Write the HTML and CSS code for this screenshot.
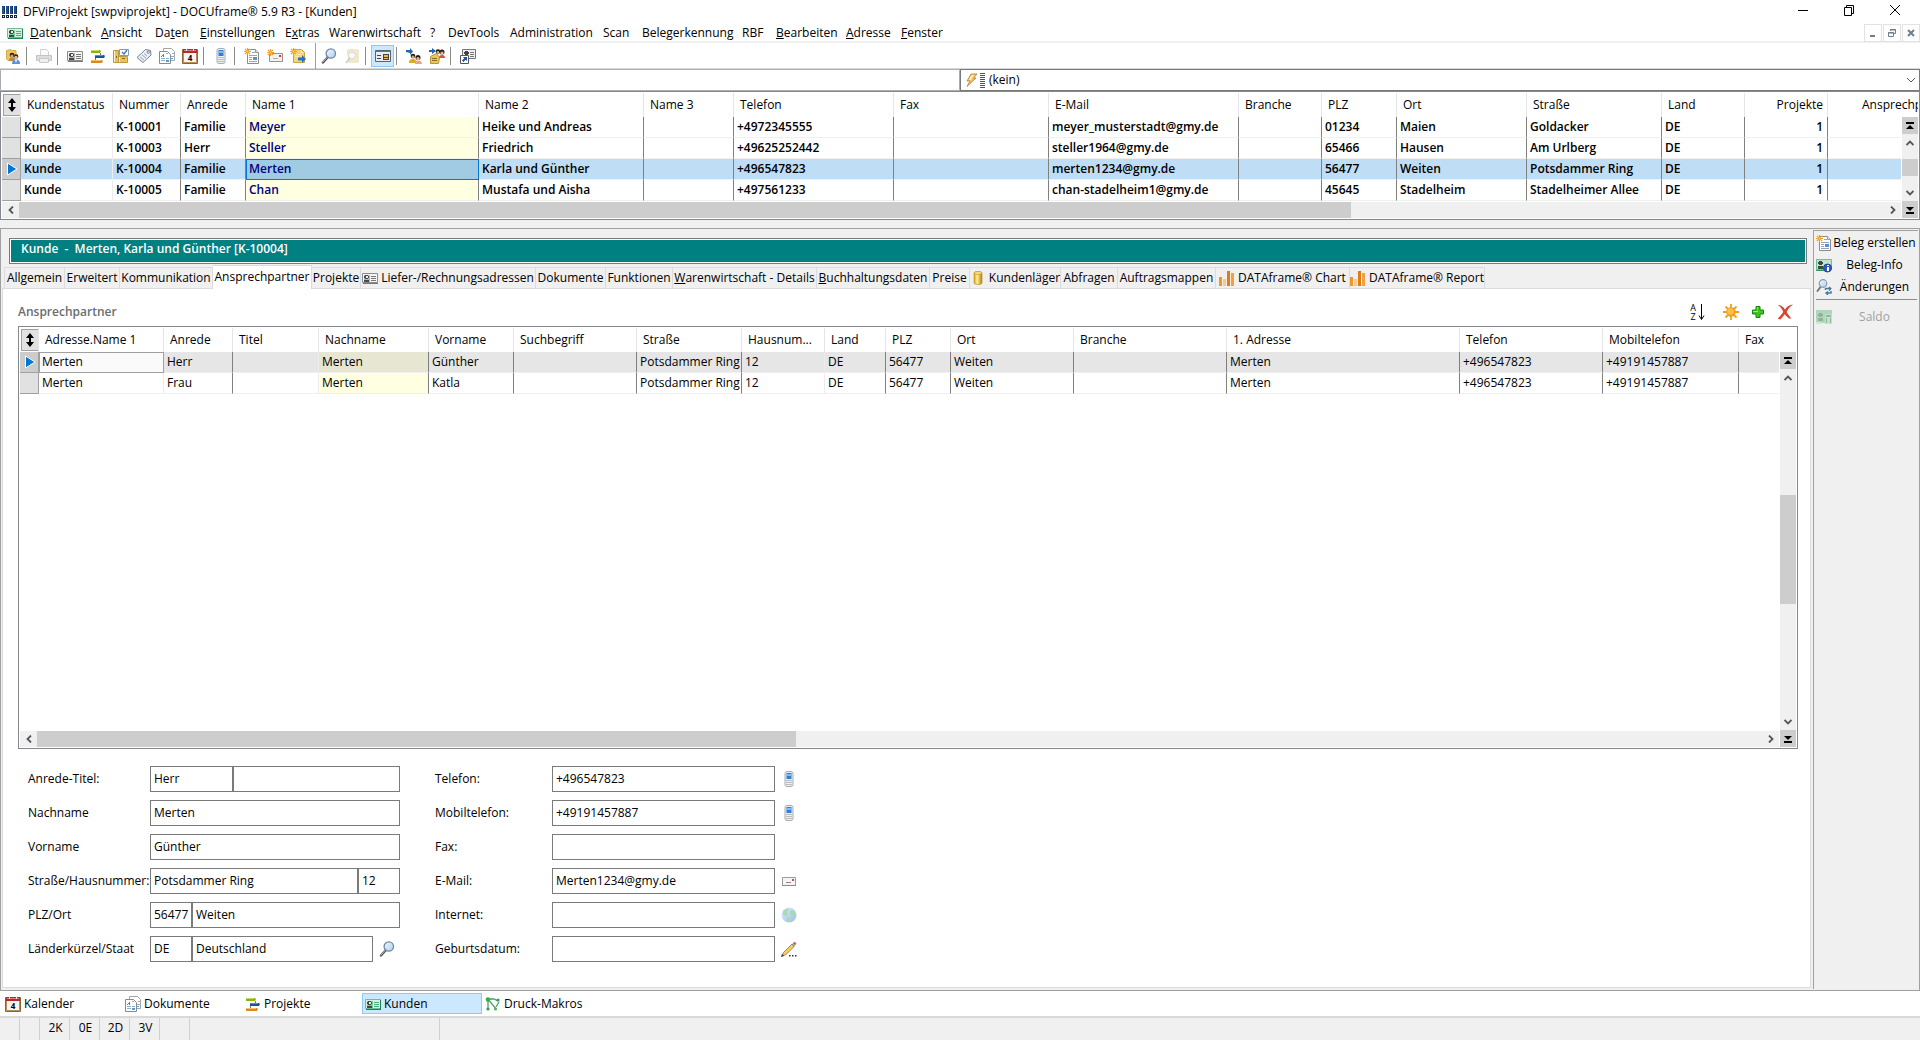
FILE: index.html
```
<!DOCTYPE html>
<html lang="de">
<head>
    <meta charset="UTF-8">
    <meta name="viewport" content="width=device-width, initial-scale=1.0">
    <link rel="stylesheet" href="styles.css">
    <title>DFViProjekt [swpviprojekt] - DOCUframe® 5.9 R3 - [Kunden]</title>
</head>
<body>
    <!-- icon sprite -->
    <svg class="sprite" aria-hidden="true">
        <defs>
            <linearGradient id="glass" x1="0" y1="0" x2="1" y2="1">
                <stop offset="0" stop-color="#f4faff"/><stop offset="1" stop-color="#a9cdf2"/>
            </linearGradient>
            <linearGradient id="gold" x1="0" y1="0" x2="1" y2="0">
                <stop offset="0" stop-color="#d9a514"/><stop offset=".4" stop-color="#fff0a0"/><stop offset="1" stop-color="#b87f00"/>
            </linearGradient>
            <linearGradient id="globeFill" x1="0" y1="0" x2="1" y2="1">
                <stop offset="0" stop-color="#e4effc"/><stop offset="1" stop-color="#9db9ee"/>
            </linearGradient>
            <linearGradient id="logoFill" x1="0" y1="0" x2="1" y2="0">
                <stop offset="0" stop-color="#5f8fd0"/><stop offset=".5" stop-color="#1d4f91"/><stop offset="1" stop-color="#12315f"/>
            </linearGradient>
        </defs>
        <symbol id="logo" viewBox="0 0 16 12">
            <path fill="#1d4f91" d="M0 0h3v8H0zM4 0h3v8H4zM8 0h3v8H8zM12 0h3v8h-3z"/>
            <path fill="#12315f" d="M2 0h1v8H2zM6 0h1v8H6zM10 0h1v8h-1zM14 0h1v8h-1z"/>
            <path fill="#16233c" d="M0 9h3v3H0zM4 9h3v3H4zM8 9h3v3H8zM12 9h3v3h-3z"/>
            <path fill="#dce6f2" d="M1 10h1v1H1zM5 10h1v1H5zM9 10h1v1H9zM13 10h1v1h-1z"/>
        </symbol>
        <symbol id="card" viewBox="0 0 16 16">
            <path fill="#f4f4f4" stroke="#8c8c8c" d="M.5 3.500h15v9h-15z"/>
            <path fill="#777" d="M1 13h15v1H1z"/>
            <path fill="#b5b5b5" d="M2 5h6v7H2z"/>
            <path fill="#4a4a4a" d="M3 5h3v1h1v2H6v1H3V8H2V6h1zM2 10h5v2H2z"/>
            <path fill="#eee" d="M4 6h2v2H4z"/>
            <path fill="#777" d="M9 6h5v1H9zM9 8h5v1H9zM9 10h5v1H9z"/>
        </symbol>
        <symbol id="card-green" viewBox="0 0 16 16">
            <path fill="#d4f3df" stroke="#6cbf93" d="M.5 3.500h15v9h-15z"/>
            <path fill="#1d7f50" d="M1 13h15v1H1zM15 4h1v9h-1z"/>
            <path fill="#7dc79c" d="M2 5h6v7H2z"/>
            <path fill="#3d4a44" d="M3 5h3v1h1v2H6v1H3V8H2V6h1zM2 10h5v2H2z"/>
            <path fill="#e6efe9" d="M4 6h2v2H4z"/>
            <path fill="#4fae7c" d="M9 6h5v1H9zM9 8h5v1H9zM9 10h5v1H9z"/>
        </symbol>
        <symbol id="people-folder" viewBox="0 0 16 16">
            <path fill="#e9c65e" stroke="#d0ac48" d="M1.500 2.500L6 1.500l1 1h4v8l-8 2-1.500-1.500z"/>
            <circle cx="7" cy="7" r="2.300" fill="#2c1c14"/><circle cx="7" cy="8" r="1.600" fill="#dba36f"/>
            <path fill="#b98a3a" d="M4 13c0-3 1-3.500 3-3.500s3 1 3 3.500z"/>
            <circle cx="11" cy="8.500" r="2.300" fill="#2c1c14"/><circle cx="11" cy="9.500" r="1.700" fill="#e9b98b"/>
            <path fill="#5b8fe0" d="M7 16c0-3 1-4.500 4-4.500s4 1.500 4 4.500z"/><path fill="#fff" d="M10 12h2l-1 3z"/>
        </symbol>
        <symbol id="printer" viewBox="0 0 16 16">
            <path fill="#fafafa" stroke="#d0d0d0" d="M4.500 1.500h6l2 2v4h-8z"/>
            <path fill="#dcdcdc" stroke="#c4c4c4" d="M.5 7.500h15v5H.5z"/>
            <path fill="#efefef" stroke="#c8c8c8" d="M3.500 10.500h9v4h-9z"/>
        </symbol>
        <symbol id="gantt" viewBox="0 0 16 16">
            <path fill="#8fae1c" d="M1 2h9l1 1-1 2H1z"/><path fill="#c6dc5a" d="M1 2h8v1H1z"/>
            <path fill="#14569b" d="M5 7h9l1 1-1 2H5z"/><path fill="#3f97e0" d="M5 7h8v1H5z"/>
            <path fill="#d98a26" d="M1 12h11l1 1-1 2H1z"/><path fill="#f7be63" d="M1 12h10v1H1z"/>
            <path fill="#777" d="M10 5h1v2h-1zM5 10h1v2H5z"/>
        </symbol>
        <symbol id="cabinet" viewBox="0 0 16 16">
            <path fill="#e8c35c" stroke="#b99a44" d="M.5 2.500h5v12h-5zM5.500 8.500h9v6h-9z"/>
            <path fill="#fff1bd" d="M1 3h1v11H1zM6 9h1v5H6z"/>
            <path fill="#fff" stroke="#7f9fbf" d="M6.500 1.500h9v6h-9z"/>
            <path fill="none" stroke="#3a78b8" stroke-width="1.300" d="M9 4l2 2 3-4"/>
            <path fill="#8b6a1c" d="M3 8h1v2H3zM9 10h3v1H9z"/>
        </symbol>
        <symbol id="tag" viewBox="0 0 16 16">
            <path fill="#eef2f6" stroke="#73818f" d="M9.500 1.500l5 1 .500 4.500-8 7.500-6-5z"/>
            <circle cx="12.200" cy="4.200" r="1.200" fill="#fff" stroke="#73818f"/>
            <path stroke="#8fa3b8" d="M4 9l4 3M6 7l4 3M8 5.500l3 2.500"/>
        </symbol>
        <symbol id="docs" viewBox="0 0 16 16">
            <path fill="#fff" stroke="#a6a6a6" d="M4.500.5h8l3 3v9h-11z"/>
            <path fill="#fff" stroke="#8a8a8a" d="M.5 3.500h8l3 3v9H.5z"/>
            <path fill="#5b77c9" d="M2 8h1V7h1V6h1v3H4V8H3v1H2z"/>
            <path fill="#8fb0cc" d="M2 10h4v1H2zM2 12h4v1H2zM7 10h3v1H7zM7 5h2v1H7zM13 5h2v1h-2zM12 8h3v1h-3z"/>
            <path fill="#4fa3d8" d="M7 12h3v2H7zM12 10h2v1h-2z"/>
        </symbol>
        <symbol id="calendar" viewBox="0 0 16 16">
            <path fill="#f6f6f6" stroke="#8a6234" d="M.5 1.500h15v14H.5z"/>
            <path fill="none" stroke="#b98d58" d="M1.500 5v9.500h13V5"/>
            <path fill="#b82a2a" d="M1 1h14v4H1z"/><path fill="#e08078" d="M2 2h12v1H2z"/>
            <path fill="#eee" d="M4 0h1v3H4zM11 0h1v3h-1z"/>
            <text x="8" y="13" text-anchor="middle" class="day">4</text>
        </symbol>
        <symbol id="phone" viewBox="0 0 16 16">
            <rect x="4" y=".5" width="8" height="15" rx="2" fill="#eceff2" stroke="#a7adb3"/>
            <path fill="#2f7fd0" d="M5.500 2h5v6h-5z"/><path fill="#7fbcf0" d="M6 3h4v2H6z"/>
            <path fill="#8a8a8a" d="M5.500 9h1v1h-1zM7.500 9h1v1h-1zM9.500 9h1v1h-1zM5.500 11h1v1h-1zM7.500 11h1v1h-1zM9.500 11h1v1h-1zM5.500 13h1v1h-1zM7.500 13h1v1h-1zM9.500 13h1v1h-1z"/>
        </symbol>
        <symbol id="spark" viewBox="0 0 8 8">
            <path stroke="#f0a020" stroke-width="1.400" d="M4 0v8M0 4h8M1 1l6 6M7 1L1 7"/>
            <path fill="#ffd45a" d="M3 3h2v2H3z"/>
        </symbol>
        <symbol id="new-doc" viewBox="0 0 16 16">
            <path fill="#fff" stroke="#8a8a8a" d="M3.500 1.500h8l3 3v11h-11z"/>
            <path fill="#e8e8e8" stroke="#9a9a9a" d="M11.500 1.500v3h3"/>
            <path fill="#90a8bc" d="M8 4h3v1H8zM5 7h8v1H5zM5 9h3v1H5zM5 11h3v1H5zM5 13h8v1H5z"/>
            <path fill="#5a8fd0" d="M9 9h4v3H9z"/>
            <use href="#spark" x="0" y="0" width="7" height="7"/>
        </symbol>
        <symbol id="new-mail" viewBox="0 0 16 16">
            <path fill="#f4f1ee" stroke="#9a928a" d="M2.500 5.500h13v8h-13z"/>
            <path fill="#d33" d="M12 7h2v2h-2z"/><path fill="#aaa" d="M6 10h5v1H6z"/>
            <use href="#spark" x="0" y="1" width="7" height="7"/>
        </symbol>
        <symbol id="new-note" viewBox="0 0 16 16">
            <path fill="#f3d774" stroke="#c9a544" d="M3.500 1.500h8l3 3v10h-11z"/>
            <path fill="#fae9a8" d="M11 2l3 3h-3zM5 6h7v1H5zM5 8h4v1H5z"/>
            <path fill="#2e6fc4" d="M8 9.500h4V7l4 4-4 4v-2.500H8z"/>
            <use href="#spark" x="0" y="0" width="7" height="7"/>
        </symbol>
        <symbol id="search" viewBox="0 0 16 16">
            <path stroke="#555" stroke-width="2.400" stroke-linecap="round" d="M6.500 9.500L2 14.500"/>
            <path stroke="#b5b5b5" stroke-width="1" stroke-linecap="round" d="M6 9.500L2 14"/>
            <circle cx="9.800" cy="5.500" r="4.700" fill="url(#glass)" stroke="#7088a4" stroke-width="1.300"/>
        </symbol>
        <symbol id="search-folder" viewBox="0 0 16 16">
            <g opacity=".35"><path fill="#e9c65e" stroke="#c09a35" d="M3.500 2.500L8 1l1 1h5v12h-9z"/>
            <circle cx="8" cy="7.500" r="3.500" fill="#eaf3fc" stroke="#888"/>
            <path stroke="#777" stroke-width="2" d="M6 10l-4 5"/></g>
        </symbol>
        <symbol id="form" viewBox="0 0 16 16">
            <path fill="#e9ecf0" stroke="#5a6470" d="M.5 2.500h15v11H.5z"/><path fill="#6a7684" d="M1 3h14v1H1z"/>
            <path fill="#444" d="M2 7h4v1H2zM2 10h4v1H2zM8 6h6v1H8zM8 9h6v1H8zM8 11h6v1H8zM8 6h1v3H8zM13 6h1v6h-1zM8 9h1v3H8z"/>
            <path fill="#e3c04e" d="M9 7h4v2H9zM9 10h4v1H9z"/>
        </symbol>
        <symbol id="assign" viewBox="0 0 16 16">
            <path fill="#2465b5" d="M0 2h4V0l3 3.500L4 7V5L0 4z"/>
            <circle cx="7" cy="8" r="2.300" fill="#2c1c14"/><circle cx="7" cy="9" r="1.500" fill="#dba36f"/>
            <path fill="#d8ac30" d="M3 15c0-3 1-4 4-4s3 1 3 4z"/>
            <circle cx="12" cy="9.500" r="2.500" fill="#2c1c14"/><circle cx="12" cy="10.500" r="1.600" fill="#e9b98b"/>
            <path fill="#e6a48c" d="M9 16c0-2.500 1-3.500 3-3.500s4 1 4 3.500z"/>
        </symbol>
        <symbol id="move" viewBox="0 0 16 16">
            <path fill="#e9c65e" stroke="#b89638" d="M1.500 8.500l6-3 3 4-1 6h-8z"/><path fill="#8b6a1c" d="M3 10h5v1H3zM3 12h5v1H3z"/>
            <path fill="#2465b5" d="M0 2h3V0l4 3-4 3V4H0z"/>
            <circle cx="9" cy="3.500" r="2.300" fill="#2c1c14"/><circle cx="9" cy="4.300" r="1.400" fill="#dba36f"/>
            <circle cx="13" cy="4" r="2.500" fill="#2c1c14"/><circle cx="13" cy="5" r="1.600" fill="#e9b98b"/>
            <path fill="#d4504a" d="M10 10c0-2 1-3 3-3s3 1 3 3z"/>
        </symbol>
        <symbol id="shortcut" viewBox="0 0 16 16">
            <path fill="#f0f0f0" stroke="#777" d="M2.500 1.500h13v9h-13z"/>
            <path fill="#444" d="M5 3h3v1h1v2H8v1H5V6H4V4h1z"/><path fill="#777" d="M10 4h4v1h-4zM10 6h4v1h-4zM10 8h4v1h-4z"/>
            <path fill="#fff" stroke="#555" d="M.5 7.500h8v8h-8z"/><path fill="#1f4f9f" d="M3 9h4v4L5.600 11.800 3.400 14 2 12.600 4.300 10.300z"/>
        </symbol>
        <symbol id="bolt" viewBox="0 0 16 16">
            <path fill="#f3c06a" stroke="#b57a38" stroke-width=".800" d="M7 2h6L9.500 6H12l-9 8.500L6 9H3z"/>
            <path fill="#fdeab8" d="M7.500 3h3L7 8H4.500z"/>
        </symbol>
        <symbol id="cylinder" viewBox="0 0 16 16">
            <path fill="url(#gold)" stroke="#b88a10" stroke-width=".600" d="M4 3c0-2 8-2 8 0v10c0 2-8 2-8 0z"/>
            <ellipse cx="8" cy="3" rx="4" ry="1.400" fill="#fbe68a" stroke="#b88a10" stroke-width=".600"/>
        </symbol>
        <symbol id="bars" viewBox="0 0 16 16">
            <path fill="#f0962a" d="M0 7h3v9H0z"/><path fill="#f8c88c" d="M4 9h3v7H4z"/><path fill="#e07c14" d="M8 1h3v15H8z"/><path fill="#f0a040" d="M12 3h3v13h-3z"/>
        </symbol>
        <symbol id="card-info" viewBox="0 0 16 16">
            <path fill="#bfe6cc" stroke="#6cbf93" d="M.5 2.500h15v10h-15z"/>
            <path fill="#3d4a44" d="M3 4h3v1h1v2H6v1H3V7H2V5h1zM2 9h5v3H2z"/>
            <path fill="#2f9a5f" d="M0 13h10v1H0z"/>
            <circle cx="11.500" cy="11" r="4" fill="#3159c4" stroke="#24409a"/><path fill="#fff" d="M11 8h2v1h-2zM11 10h2v4h-2z"/>
        </symbol>
        <symbol id="search-sync" viewBox="0 0 16 16">
            <path stroke="#777" stroke-width="2" stroke-linecap="round" d="M4.500 8L1.500 12"/>
            <circle cx="7" cy="4.500" r="3.800" fill="url(#glass)" stroke="#8c9cb0" stroke-width="1.200"/>
            <path fill="none" stroke="#4a7a9a" stroke-width="1.400" d="M9.500 11V9.500H14M13 8l1.800 1.500L13 11.500M15 12v2h-4.500M12 12.500L10 14l2 1.800"/>
        </symbol>
        <symbol id="cash" viewBox="0 0 16 16">
            <g opacity=".55"><path fill="#79c48d" d="M0 1h16v4H9v9H0z"/>
            <path fill="#4a7a5a" d="M3 4h3v1h1v2H6v1H3V7H2V5h1zM2 9h5v3H2z"/>
            <path fill="#bfe2a8" d="M0 13h6v2H0z"/><path fill="#9fd8b0" d="M9 5h7v10H9z"/><path fill="#3f8a5a" d="M10 6h5v2h-5zM10 9h1v5h-1zM14 9h1v5h-1z"/></g>
        </symbol>
        <symbol id="sun" viewBox="0 0 16 16">
            <path stroke="#f0a21c" stroke-width="1.800" d="M8 0v16M0 8h16M2.500 2.500l11 11M13.500 2.500l-11 11"/>
            <circle cx="8" cy="8" r="4.800" fill="#f2a01e"/><circle cx="7.500" cy="7.500" r="3.200" fill="#fcbf48"/>
        </symbol>
        <symbol id="plus" viewBox="0 0 16 16">
            <path fill="#3cc81e" stroke="#17850c" d="M6 2.500h4V6h3.500v4H10v3.500H6V10H2.500V6H6z"/>
            <path fill="#9cec84" d="M7 3h1v4H3v1h5z"/>
        </symbol>
        <symbol id="cross" viewBox="0 0 16 16">
            <path fill="#d8452f" d="M1 1c3 0 5 1.500 7 4.500C10 2.500 12 1 16 .5 12.500 3 11 5 9.700 8c1.500 2.500 2.500 4 4.600 6.500h-2.300C10.500 13.500 9 12 7.800 10.300 6 12.500 5 14 3.500 15.500L.8 14.800C3 12 5 10 6.200 7.700 5 5 3.500 3 1 1z"/>
        </symbol>
        <symbol id="mail" viewBox="0 0 16 16">
            <path fill="#f4f4f4" stroke="#9c9c9c" d="M1.500 4.500h13v8h-13z"/><path fill="#8a8a8a" d="M1 12h14v1H1zM5 9h5v1H5z"/><path fill="#e0463c" d="M11 6h2v2h-2z"/>
        </symbol>
        <symbol id="globe" viewBox="0 0 16 16">
            <circle cx="8" cy="8" r="7.500" fill="url(#globeFill)"/>
            <path fill="#a2dcb0" d="M2 4l4-2.500 2 1L6 5l1 2-3 2-2-1zM9 3l4 1 2 4-3 2-3-3zM5 10l4 1 1 3-3 1z"/>
        </symbol>
        <symbol id="pencil" viewBox="0 0 16 16">
            <path fill="#f4cf68" stroke="#94702c" stroke-width=".800" d="M2.500 11.500L11 3l2.300 2.300L5 13.500l-4 1.500z"/>
            <path fill="#333" d="M0 16l1-3 2 2zM8 14h1.500v1.500H8zM11 14h1.500v1.500H11zM14 14h1.500v1.500H14z"/>
            <path fill="#6a9a80" d="M10.500 3.500l1-1 2.300 2.300-1 1z"/><path fill="#d4586a" d="M11.800 2.200L13.500.8 15.500 2.500 14 4.500z"/>
        </symbol>
        <symbol id="macro" viewBox="0 0 16 16">
            <path fill="none" stroke="#4a9f6c" stroke-width="1.300" d="M3 13V3l8 10M3 3h6l4 2M11 11l3-5"/>
            <circle cx="3" cy="3.500" r="2.300" fill="#2fb24a"/><circle cx="13" cy="4" r="1.600" fill="#3c9464"/>
            <circle cx="3" cy="13" r="1.600" fill="#3c9464"/><circle cx="10.500" cy="13" r="1.600" fill="#5aae6a"/>
        </symbol>
        <symbol id="updown" viewBox="0 0 10 14">
            <path d="M5 0l4 5H6v4h3l-4 5-4-5h3V5H1z"/>
        </symbol>
        <symbol id="marker" viewBox="0 0 12 14"><path fill="#0078d7" stroke="#fff" d="M1.500 1L11 7l-9.500 6z"/></symbol>
        <symbol id="first" viewBox="0 0 8 8"><path d="M0 0h8v2H0zM4 3l4 4H0z"/></symbol>
        <symbol id="last" viewBox="0 0 8 8"><path d="M0 6h8v2H0zM4 5l4-4H0z"/></symbol>
        <symbol id="left" viewBox="0 0 8 8"><path fill="none" stroke="#555" stroke-width="1.800" d="M6 .5L2.500 4 6 7.500"/></symbol>
        <symbol id="right" viewBox="0 0 8 8"><path fill="none" stroke="#555" stroke-width="1.800" d="M2 .5L5.500 4 2 7.500"/></symbol>
        <symbol id="up" viewBox="0 0 8 8"><path fill="none" stroke="#555" stroke-width="1.800" d="M.5 6L4 2.500 7.500 6"/></symbol>
        <symbol id="down" viewBox="0 0 8 8"><path fill="none" stroke="#555" stroke-width="1.800" d="M.5 2L4 5.500 7.500 2"/></symbol>
    </svg>

    <header class="titlebar">
        <svg class="logo"><use href="#logo"/></svg>
        <span class="title">DFViProjekt [swpviprojekt] - DOCUframe® 5.9 R3 - [Kunden]</span>
        <div class="window-buttons">
            <button aria-label="Minimieren"><svg viewBox="0 0 12 12"><path d="M1 6.500h10"/></svg></button>
            <button aria-label="Wiederherstellen"><svg viewBox="0 0 12 12"><path d="M1.500 3.500h7v8h-7zM3.500 3.500v-2h7v8h-2"/></svg></button>
            <button aria-label="Schließen"><svg viewBox="0 0 12 12"><path d="M1 1l10 10M11 1L1 11"/></svg></button>
        </div>
    </header>

    <nav class="menubar">
        <svg class="icon"><use href="#card-green"/></svg>
        <div class="menu">
            <button><u>D</u>atenbank</button>
            <button><u>A</u>nsicht</button>
            <button>Da<u>t</u>en</button>
            <button><u>E</u>instellungen</button>
            <button>E<u>x</u>tras</button>
            <button>Warenwirtschaft</button>
            <button>?</button>
            <button>DevTools</button>
            <button>Administration</button>
            <button>Scan</button>
            <button>Belegerkennung</button>
            <button>RBF</button>
            <button><u>B</u>earbeiten</button>
            <button><u>A</u>dresse</button>
            <button><u>F</u>enster</button>
        </div>
        <div class="mdi-buttons">
            <button aria-label="Fenster minimieren"><svg viewBox="0 0 10 10"><path d="M2 8h5"/></svg></button>
            <button aria-label="Fenster wiederherstellen"><svg viewBox="0 0 10 10"><path class="thin" d="M1.500 4.500h5v4h-5zM1 5h6M3.500 3V1.500h5v4H7M3 2h6"/></svg></button>
            <button aria-label="Fenster schließen"><svg viewBox="0 0 10 10"><path d="M2 2l6 6M8 2L2 8"/></svg></button>
        </div>
    </nav>

    <div class="toolbar">
        <button aria-label="Adressen"><svg class="icon"><use href="#people-folder"/></svg></button>
        <span class="sep"></span>
        <button aria-label="Drucken"><svg class="icon"><use href="#printer"/></svg></button>
        <span class="sep"></span>
        <button aria-label="Kunden"><svg class="icon"><use href="#card"/></svg></button>
        <button aria-label="Projekte"><svg class="icon"><use href="#gantt"/></svg></button>
        <button aria-label="Aufgaben"><svg class="icon"><use href="#cabinet"/></svg></button>
        <button aria-label="Artikel"><svg class="icon"><use href="#tag"/></svg></button>
        <button aria-label="Dokumente"><svg class="icon"><use href="#docs"/></svg></button>
        <button aria-label="Kalender"><svg class="icon"><use href="#calendar"/></svg></button>
        <span class="sep"></span>
        <button aria-label="Telefon"><svg class="icon"><use href="#phone"/></svg></button>
        <span class="sep"></span>
        <button aria-label="Neues Dokument"><svg class="icon"><use href="#new-doc"/></svg></button>
        <button aria-label="Neue E-Mail"><svg class="icon"><use href="#new-mail"/></svg></button>
        <button aria-label="Neue Notiz"><svg class="icon"><use href="#new-note"/></svg></button>
        <span class="sep sep-full"></span>
        <button aria-label="Suchen"><svg class="icon"><use href="#search"/></svg></button>
        <button aria-label="Suchordner"><svg class="icon"><use href="#search-folder"/></svg></button>
        <span class="sep"></span>
        <button class="pressed" aria-label="Formularansicht"><svg class="icon"><use href="#form"/></svg></button>
        <span class="sep"></span>
        <button aria-label="Zuordnen"><svg class="icon"><use href="#assign"/></svg></button>
        <button aria-label="Verschieben"><svg class="icon"><use href="#move"/></svg></button>
        <span class="sep"></span>
        <button aria-label="Verknüpfung"><svg class="icon"><use href="#shortcut"/></svg></button>
    </div>

    <div class="filterbar">
        <input type="text" aria-label="Schnellsuche">
        <div class="filter-select">
            <svg class="icon"><use href="#bolt"/></svg>
            <span class="grip"></span>
            <select aria-label="Filter"><option>(kein)</option></select>
            <svg class="chevron" viewBox="0 0 10 10"><path d="M1 3l4 4 4-4"/></svg>
        </div>
    </div>

    <section class="grid customers">
        <table>
            <colgroup>
                <col style="width: 19px"><col style="width: 92px"><col style="width: 68px"><col style="width: 65px"><col style="width: 233px"><col style="width: 165px"><col style="width: 90px"><col style="width: 160px"><col style="width: 155px"><col style="width: 190px"><col style="width: 83px"><col style="width: 75px"><col style="width: 130px"><col style="width: 135px"><col style="width: 83px"><col style="width: 83px"><col>
            </colgroup>
            <thead>
                <tr>
                    <th class="gutter"><button aria-label="Sortierung"><svg><use href="#updown"/></svg></button></th>
                    <th>Kundenstatus</th><th>Nummer</th><th>Anrede</th><th>Name 1</th><th>Name 2</th><th>Name 3</th><th>Telefon</th><th>Fax</th><th>E-Mail</th><th>Branche</th><th>PLZ</th><th>Ort</th><th>Straße</th><th>Land</th><th class="num">Projekte</th><th class="last">Ansprechp</th>
                </tr>
            </thead>
            <tbody>
                <tr><td class="gutter"></td><td class="soft">Kunde</td><td>K-10001</td><td>Familie</td><td class="key">Meyer</td><td>Heike und Andreas</td><td></td><td>+4972345555</td><td></td><td>meyer_musterstadt@gmy.de</td><td></td><td>01234</td><td>Maien</td><td>Goldacker</td><td>DE</td><td class="num">1</td><td></td></tr>
                <tr><td class="gutter"></td><td class="soft">Kunde</td><td>K-10003</td><td>Herr</td><td class="key">Steller</td><td>Friedrich</td><td></td><td>+49625252442</td><td></td><td>steller1964@gmy.de</td><td></td><td>65466</td><td>Hausen</td><td>Am Urlberg</td><td>DE</td><td class="num">1</td><td></td></tr>
                <tr class="selected"><td class="gutter"><svg><use href="#marker"/></svg></td><td class="soft">Kunde</td><td>K-10004</td><td>Familie</td><td class="key focus">Merten</td><td>Karla und Günther</td><td></td><td>+496547823</td><td></td><td>merten1234@gmy.de</td><td></td><td>56477</td><td>Weiten</td><td>Potsdammer Ring</td><td>DE</td><td class="num">1</td><td></td></tr>
                <tr><td class="gutter"></td><td class="soft">Kunde</td><td>K-10005</td><td>Familie</td><td class="key">Chan</td><td>Mustafa und Aisha</td><td></td><td>+497561233</td><td></td><td>chan-stadelheim1@gmy.de</td><td></td><td>45645</td><td>Stadelheim</td><td>Stadelheimer Allee</td><td>DE</td><td class="num">1</td><td></td></tr>
            </tbody>
        </table>
        <div class="hscroll">
            <button aria-label="Links"><svg><use href="#left"/></svg></button>
            <div class="track"><div class="thumb" style="width: 71.4%"></div></div>
            <button aria-label="Rechts"><svg><use href="#right"/></svg></button>
        </div>
        <div class="vscroll">
            <button class="end" aria-label="Anfang"><svg><use href="#first"/></svg></button>
            <button aria-label="Hoch"><svg><use href="#up"/></svg></button>
            <div class="track"><div class="thumb"></div></div>
            <button aria-label="Runter"><svg><use href="#down"/></svg></button>
            <button class="end" aria-label="Ende"><svg><use href="#last"/></svg></button>
        </div>
    </section>

    <main class="workspace">
        <section class="record">
            <h1 class="record-title">Kunde&nbsp; -&nbsp; Merten, Karla und Günther [K-10004]</h1>
            <div class="tabs" role="tablist">
                <button role="tab">Allgemein</button>
                <button role="tab">Erweitert</button>
                <button role="tab">Kommunikation</button>
                <button role="tab" class="active" aria-selected="true">Ansprechpartner</button>
                <button role="tab">Projekte</button>
                <button role="tab"><svg class="icon"><use href="#card"/></svg>Liefer-/Rechnungsadressen</button>
                <button role="tab">Dokumente</button>
                <button role="tab">Funktionen</button>
                <button role="tab"><span><u>W</u>arenwirtschaft - Details</span></button>
                <button role="tab"><span><u>B</u>uchhaltungsdaten</span></button>
                <button role="tab">Preise</button>
                <button role="tab"><svg class="icon"><use href="#cylinder"/></svg>Kundenläger</button>
                <button role="tab">Abfragen</button>
                <button role="tab">Auftragsmappen</button>
                <button role="tab"><svg class="icon"><use href="#bars"/></svg>DATAframe® Chart</button>
                <button role="tab"><svg class="icon"><use href="#bars"/></svg>DATAframe® Report</button>
            </div>
            <div class="panel">
                <div class="panel-head">
                    <h2>Ansprechpartner</h2>
                    <div class="panel-tools">
                        <button class="sort" aria-label="Sortieren"><span class="sort-letters"><span>A</span><span>Z</span></span><svg viewBox="0 0 7 16"><path d="M3.500 0v15M1 11.500l2.500 4 2.500-4"/></svg></button>
                        <button aria-label="Neu"><svg class="icon"><use href="#sun"/></svg></button>
                        <button aria-label="Hinzufügen"><svg class="icon"><use href="#plus"/></svg></button>
                        <button aria-label="Entfernen"><svg class="icon"><use href="#cross"/></svg></button>
                    </div>
                </div>

                <div class="grid contacts">
                    <div class="grid-body">
                        <table>
                            <colgroup>
                                <col style="width: 19px"><col style="width: 125px"><col style="width: 69px"><col style="width: 86px"><col style="width: 110px"><col style="width: 85px"><col style="width: 123px"><col style="width: 105px"><col style="width: 83px"><col style="width: 61px"><col style="width: 65px"><col style="width: 123px"><col style="width: 153px"><col style="width: 233px"><col style="width: 143px"><col style="width: 136px"><col>
                            </colgroup>
                            <thead>
                                <tr>
                                    <th class="gutter"><button aria-label="Sortierung"><svg><use href="#updown"/></svg></button></th>
                                    <th>Adresse.Name 1</th><th>Anrede</th><th>Titel</th><th>Nachname</th><th>Vorname</th><th>Suchbegriff</th><th>Straße</th><th>Hausnum...</th><th>Land</th><th>PLZ</th><th>Ort</th><th>Branche</th><th>1. Adresse</th><th>Telefon</th><th>Mobiltelefon</th><th class="last">Fax</th>
                                </tr>
                            </thead>
                            <tbody>
                                <tr class="selected"><td class="gutter"><svg><use href="#marker"/></svg></td><td class="focus">Merten</td><td>Herr</td><td class="soft"></td><td class="key">Merten</td><td>Günther</td><td></td><td>Potsdammer Ring</td><td class="soft">12</td><td>DE</td><td>56477</td><td>Weiten</td><td></td><td>Merten</td><td>+496547823</td><td>+49191457887</td><td></td></tr>
                                <tr><td class="gutter"></td><td class="soft">Merten</td><td>Frau</td><td class="soft"></td><td class="key">Merten</td><td>Katla</td><td></td><td>Potsdammer Ring</td><td class="soft">12</td><td>DE</td><td>56477</td><td>Weiten</td><td></td><td>Merten</td><td>+496547823</td><td>+49191457887</td><td></td></tr>
                            </tbody>
                        </table>
                    </div>
                    <div class="hscroll">
                        <button aria-label="Links"><svg><use href="#left"/></svg></button>
                        <div class="track"><div class="thumb" style="width: 44%"></div></div>
                        <button aria-label="Rechts"><svg><use href="#right"/></svg></button>
                    </div>
                    <div class="vscroll">
                        <button class="end" aria-label="Anfang"><svg><use href="#first"/></svg></button>
                        <button aria-label="Hoch"><svg><use href="#up"/></svg></button>
                        <div class="track"><div class="thumb"></div></div>
                        <button aria-label="Runter"><svg><use href="#down"/></svg></button>
                        <button class="end" aria-label="Ende"><svg><use href="#last"/></svg></button>
                    </div>
                </div>

                <form class="details">
                    <div class="details-column">
                        <div class="field">
                            <label for="anrede">Anrede-Titel:</label>
                            <div class="inputs split-title"><input id="anrede" type="text" value="Herr"><input type="text" aria-label="Titel"></div>
                        </div>
                        <div class="field">
                            <label for="nachname">Nachname</label>
                            <div class="inputs"><input id="nachname" type="text" value="Merten"></div>
                        </div>
                        <div class="field">
                            <label for="vorname">Vorname</label>
                            <div class="inputs"><input id="vorname" type="text" value="Günther"></div>
                        </div>
                        <div class="field">
                            <label for="strasse">Straße/Hausnummer:</label>
                            <div class="inputs split-street"><input id="strasse" type="text" value="Potsdammer Ring"><input type="text" value="12" aria-label="Hausnummer"></div>
                        </div>
                        <div class="field">
                            <label for="plz">PLZ/Ort</label>
                            <div class="inputs split-code"><input id="plz" type="text" value="56477"><input type="text" value="Weiten" aria-label="Ort"></div>
                        </div>
                        <div class="field">
                            <label for="land">Länderkürzel/Staat</label>
                            <div class="inputs split-country"><input id="land" type="text" value="DE"><input type="text" value="Deutschland" aria-label="Staat"><button type="button" aria-label="Land suchen"><svg class="icon"><use href="#search"/></svg></button></div>
                        </div>
                    </div>
                    <div class="details-column contact">
                        <div class="field">
                            <label for="telefon">Telefon:</label>
                            <input id="telefon" type="text" value="+496547823">
                            <button type="button" aria-label="Anrufen"><svg class="icon"><use href="#phone"/></svg></button>
                        </div>
                        <div class="field">
                            <label for="mobil">Mobiltelefon:</label>
                            <input id="mobil" type="text" value="+49191457887">
                            <button type="button" aria-label="Mobil anrufen"><svg class="icon"><use href="#phone"/></svg></button>
                        </div>
                        <div class="field">
                            <label for="fax">Fax:</label>
                            <input id="fax" type="text">
                        </div>
                        <div class="field">
                            <label for="email">E-Mail:</label>
                            <input id="email" type="text" value="Merten1234@gmy.de">
                            <button type="button" aria-label="E-Mail schreiben"><svg class="icon"><use href="#mail"/></svg></button>
                        </div>
                        <div class="field">
                            <label for="internet">Internet:</label>
                            <input id="internet" type="text">
                            <button type="button" aria-label="Webseite öffnen"><svg class="icon"><use href="#globe"/></svg></button>
                        </div>
                        <div class="field">
                            <label for="geburtsdatum">Geburtsdatum:</label>
                            <input id="geburtsdatum" type="text">
                            <button type="button" aria-label="Datum bearbeiten"><svg class="icon"><use href="#pencil"/></svg></button>
                        </div>
                    </div>
                </form>
            </div>
        </section>

        <aside class="sidebar">
            <button><svg class="icon"><use href="#new-doc"/></svg><span>Beleg erstellen</span></button>
            <button><svg class="icon"><use href="#card-info"/></svg><span>Beleg-Info</span></button>
            <button><svg class="icon"><use href="#search-sync"/></svg><span>Änderungen</span></button>
            <hr>
            <button disabled><svg class="icon"><use href="#cash"/></svg><span>Saldo</span></button>
        </aside>
    </main>

    <nav class="windowbar">
        <button><svg class="icon"><use href="#calendar"/></svg>Kalender</button>
        <button><svg class="icon"><use href="#docs"/></svg>Dokumente</button>
        <button><svg class="icon"><use href="#gantt"/></svg>Projekte</button>
        <button class="active"><svg class="icon"><use href="#card-green"/></svg>Kunden</button>
        <button><svg class="icon"><use href="#macro"/></svg>Druck-Makros</button>
    </nav>

    <footer class="statusbar">
        <span></span><span></span><span>2K</span><span>0E</span><span>2D</span><span>3V</span><span></span><span></span>
    </footer>
</body>
</html>
```
FILE: styles.css
```
* {
    box-sizing: border-box;
}

body {
    display: flex;
    flex-direction: column;
    height: 100vh;
    margin: 0;
    overflow: hidden;
    background-color: #f0f0f0;
    color: #000;
    font-family: "Open Sans", "Noto Sans", sans-serif;
    font-size: 12px;
    line-height: 16px;
}

button,
input,
select {
    margin: 0;
    padding: 0;
    border: 0;
    border-radius: 0;
    background: none;
    color: inherit;
    font: inherit;
    white-space: nowrap;
}

h1,
h2 {
    margin: 0;
    font-size: 12px;
    font-weight: 600;
}

svg {
    display: block;
    flex: none;
}

.sprite {
    position: absolute;
    width: 0;
    height: 0;
}

.icon {
    width: 16px;
    height: 16px;
}

.day {
    font-size: 8px;
    font-weight: bold;
}

/* title bar and menu */
.titlebar {
    display: flex;
    align-items: center;
    flex: none;
    height: 23px;
    padding: 0 2px;
    background-color: #fff;
}

.logo {
    width: 16px;
    height: 12px;
    margin-right: 5px;
}

.title {
    flex: 1;
}

.window-buttons {
    display: flex;
    align-self: flex-start;
}

.window-buttons button {
    display: flex;
    align-items: center;
    justify-content: center;
    width: 46px;
    height: 20px;
}

.window-buttons svg {
    width: 12px;
    height: 12px;
    fill: none;
    stroke: #000;
}

.menubar {
    display: flex;
    align-items: center;
    flex: none;
    height: 20px;
    padding: 2px 0 0 7px;
    border-bottom: 2px solid #f0f0f0;
    background-color: #fff;
}

.menu {
    display: grid;
    grid-template-columns: 71px 54px 45px 85px 44px 101px 18px 62px 93px 39px 100px 34px 70px 55px 60px;
    flex: 1;
    margin-left: 7px;
}

.menu button {
    text-align: left;
}

.mdi-buttons {
    display: flex;
    gap: 1px;
}

.mdi-buttons button {
    display: flex;
    align-items: center;
    justify-content: center;
    width: 18px;
    height: 18px;
    border: 1px solid #e2e2e2;
}

.mdi-buttons svg {
    width: 10px;
    height: 10px;
    fill: none;
    stroke: #6d7f8f;
    stroke-width: 2;
}

.mdi-buttons .thin {
    stroke-width: 1;
}

/* toolbar */
.toolbar {
    display: flex;
    align-items: center;
    flex: none;
    height: 26px;
    padding-left: 1px;
    border-bottom: 1px solid #d8d8d8;
    background-color: #fff;
}

.toolbar button {
    display: flex;
    align-items: center;
    justify-content: center;
    width: 23px;
    height: 22px;
}

.toolbar .pressed {
    border: 1px solid #90c8f6;
    background-color: #cce8ff;
}

.sep {
    width: 6px;
    height: 18px;
    margin-left: 2px;
    border-left: 1px solid #8c8c8c;
}

.sep-full {
    width: 2px;
    height: 26px;
    margin-left: 6px;
    border-color: #a0a0a0;
}

/* filter row */
.filterbar {
    display: grid;
    grid-template-columns: 1fr 1fr;
    flex: none;
    height: 22px;
}

.filterbar > input {
    padding: 0 4px;
    border: 1px solid #abadb3;
    background-color: #fff;
}

.filter-select {
    display: flex;
    align-items: center;
    padding: 0 3px;
    border: 1px solid #7a7a7a;
    background-color: #fff;
}

.filter-select select {
    flex: 1;
    margin-left: 4px;
    appearance: none;
}

.grip {
    width: 5px;
    height: 15px;
    background: repeating-linear-gradient(#555 0 1px, #fff 1px 2px);
}

.chevron {
    width: 10px;
    height: 10px;
    fill: none;
    stroke: #555;
}

/* data grids */
.grid {
    position: relative;
    padding: 1px;
    border: 1px solid #828790;
    background-color: #fff;
}

.grid table {
    width: 100%;
    table-layout: fixed;
    border-spacing: 0;
}

.grid th,
.grid td {
    overflow: hidden;
    padding: 0 0 0 3px;
    white-space: nowrap;
}

.grid th {
    height: 24px;
    padding: 0 0 0 6px;
    border-right: 1px solid #e5e5e5;
    font-weight: normal;
    text-align: left;
}

.grid td {
    height: 21px;
    border-right: 1px solid #808080;
    border-bottom: 1px solid #f0f0f0;
}

.grid th.num,
.grid td.num {
    padding-right: 4px;
    text-align: right;
}

.grid td:last-child,
.grid th.last {
    border-right: 0;
}

.grid td.soft,
.grid tr.selected .soft {
    border-right-color: #ececec;
}

.grid .gutter {
    padding: 0;
}

.grid td.gutter {
    border-color: #a0a0a0;
    background-color: #e1e1e1;
}

.gutter button {
    display: flex;
    align-items: center;
    justify-content: center;
    width: 18px;
    height: 22px;
    margin-left: 1px;
    border: 1px solid #a0a0a0;
    background-color: #e1e1e1;
}

.gutter button svg {
    width: 10px;
    height: 14px;
}

.gutter > svg {
    width: 12px;
    height: 14px;
    margin-left: 4px;
}

.grid .selected td.gutter {
    background-color: #ccc;
}

.grid td.key {
    background-color: #ffffe1;
}

.customers {
    flex: none;
}

.customers tbody {
    font-weight: 600;
}

.customers td.key {
    color: #000080;
}

.customers th.last {
    padding-left: 34px;
}

.customers .selected td {
    background-color: #bfddf5;
}

.customers .selected td.focus {
    border-color: #0078d7;
    background-color: #a0cbe2;
    box-shadow: inset 1px 1px #0078d7;
}

.contacts .selected td {
    background-color: #e6e6e6;
}

.contacts .selected td.key {
    background-color: #e6e6d2;
}

.contacts .selected td.focus {
    border-color: #a0a0a0;
    background-color: #fafafa;
    box-shadow: inset 1px 1px #a0a0a0;
}

.hscroll {
    display: flex;
    height: 16px;
    margin: 1px 17px 0 0;
    background-color: #f0f0f0;
}

.hscroll button,
.vscroll button {
    display: flex;
    align-items: center;
    justify-content: center;
    width: 17px;
    height: 16px;
}

.hscroll svg,
.vscroll svg {
    width: 8px;
    height: 8px;
}

.hscroll .track {
    flex: 1;
}

.thumb {
    height: 100%;
    background-color: #cdcdcd;
}

/* covers the right edge of the rows, below the column heads */
.vscroll {
    position: absolute;
    top: 25px;
    right: 1px;
    bottom: 1px;
    display: flex;
    flex-direction: column;
    width: 17px;
    border-left: 1px solid #fff;
    background-color: #f0f0f0;
}

.vscroll button {
    width: 16px;
    height: 17px;
}

.vscroll .end {
    background-color: #cdcdcd;
}

.vscroll .track {
    display: grid;
    grid-template-rows: 1fr 1fr 1fr;
    flex: 1;
}

.vscroll .thumb {
    grid-row: 2;
}

.customers .vscroll .track {
    grid-template-rows: 1fr 2fr 1fr;
}

/* record area */
.workspace {
    display: flex;
    flex: 1;
    min-height: 0;
    margin-top: 8px;
    border: 1px solid #a0a0a0;
}

.record {
    display: flex;
    flex: 1;
    flex-direction: column;
    min-width: 0;
}

.record-title {
    height: 26px;
    margin: 9px 4px 1px 8px;
    padding: 2px 11px;
    border: 1px solid #7a7a7a;
    background-color: #008080;
    box-shadow: inset 0 0 0 1px #fff;
    color: #fff;
}

.tabs {
    display: grid;
    grid-template-columns: 61px 55px 93px 99px 49px 175px 70px 67px 144px 113px 40px 91px 57px 98px 134px 135px;
    height: 23px;
    padding-left: 3px;
}

.tabs button {
    display: flex;
    align-items: center;
    justify-content: center;
    gap: 3px;
    margin-top: 2px;
    border-top: 1px solid #dcdcdc;
    border-right: 1px solid #dcdcdc;
}

.tabs button:first-child {
    border-left: 1px solid #dcdcdc;
}

.tabs .active {
    z-index: 1;
    margin: 0 0 -1px;
    padding-bottom: 2px;
    background-color: #fff;
}

.panel {
    display: flex;
    flex: 1;
    flex-direction: column;
    min-height: 0;
    margin: 0 0 2px 1px;
    padding: 0 12px 0 15px;
    border: 1px solid #dcdcdc;
    background-color: #fff;
}

.panel-head {
    display: flex;
    align-items: center;
    justify-content: space-between;
    height: 37px;
    padding-top: 8px;
}

.panel-head h2 {
    color: #6d6d6d;
}

.panel-tools {
    display: flex;
    align-items: center;
    gap: 11px;
    padding-right: 5px;
}

.sort {
    display: flex;
    align-items: center;
    gap: 2px;
    margin-right: 7px;
}

.sort-letters {
    display: grid;
    font-size: 9px;
    line-height: 9px;
}

.sort svg {
    width: 7px;
    height: 16px;
    fill: none;
    stroke: #000;
}

.contacts {
    display: flex;
    flex: 1;
    flex-direction: column;
    min-height: 0;
}

.grid-body {
    flex: 1;
}

.details {
    display: flex;
    gap: 35px;
    padding: 17px 10px 25px;
}

.details-column {
    display: grid;
    gap: 8px;
}

.field {
    display: grid;
    grid-template-columns: 122px 250px;
    align-items: center;
    height: 26px;
}

.contact .field {
    grid-template-columns: 117px 223px 16px;
}

.field input {
    width: 100%;
    height: 26px;
    padding: 0 3px 2px;
    border: 1px solid #7a7a7a;
    background-color: #fff;
}

.contact button,
.split-country button {
    margin-left: 6px;
}

.inputs {
    display: grid;
    align-items: center;
}

.split-title {
    grid-template-columns: 83px 1fr;
}

.split-street {
    grid-template-columns: 208px 1fr;
}

.split-code {
    grid-template-columns: 42px 1fr;
}

.split-country {
    grid-template-columns: 42px 1fr 27px;
}

/* sidebar */
.sidebar {
    flex: none;
    width: 105px;
    margin: 1px 1px 1px 2px;
    padding: 1px 1px 0 2px;
    border-top: 1px solid #a0a0a0;
    border-left: 1px solid #a0a0a0;
}

.sidebar button {
    display: grid;
    grid-template-columns: 16px 1fr;
    align-items: center;
    width: 100%;
    height: 22px;
}

.sidebar button:disabled {
    color: #a0a0a0;
}

.sidebar hr {
    margin: 1px 0 6px;
    border: 0;
    border-top: 1px solid #8c8c8c;
}

/* bottom bars */
.windowbar {
    display: flex;
    align-items: center;
    flex: none;
    height: 25px;
    padding-left: 2px;
    background-color: #fff;
}

.windowbar button {
    display: flex;
    align-items: center;
    gap: 3px;
    width: 120px;
    height: 21px;
    padding-left: 2px;
    border: 1px solid transparent;
}

.windowbar .active {
    border-color: #90c8f6;
    background-color: #cce8ff;
}

.statusbar {
    display: grid;
    grid-template-columns: 20px 20px repeat(5, 30px) 250px;
    flex: none;
    height: 24px;
    border-top: 2px solid #d9d9d9;
}

.statusbar span {
    padding: 2px 0 0 2px;
    border-right: 1px solid #d0d0d0;
    text-align: center;
}
```
